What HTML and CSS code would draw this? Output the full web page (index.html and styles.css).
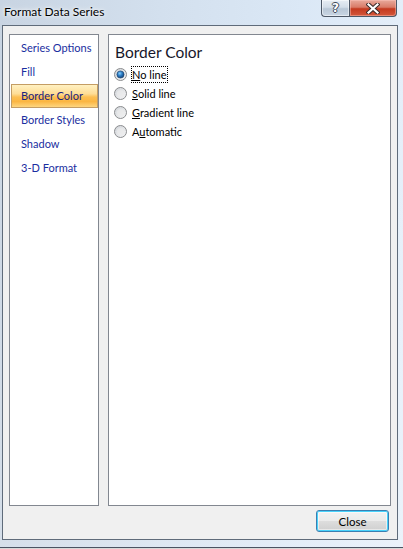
FILE: index.html
```html
<!DOCTYPE html>
<html>
<head>
<meta charset="utf-8">
<link rel="stylesheet" href="styles.css">
</head>
<body>
<div class="window">
  <div class="titlebar">
    <span class="title">Format Data Series</span>
    <div class="caption-btns">
      <div class="cap-btn help"><span class="help-glyph">?</span></div>
      <div class="cap-btn close">
        <svg width="14" height="11" viewBox="0 0 14 11">
          <path d="M2.5 1.5 L11.5 9.5 M11.5 1.5 L2.5 9.5" stroke="#3a2a2a" stroke-width="4.2" stroke-linecap="square" fill="none"/>
          <path d="M2.5 1.5 L11.5 9.5 M11.5 1.5 L2.5 9.5" stroke="#ffffff" stroke-width="2.2" stroke-linecap="square" fill="none"/>
        </svg>
      </div>
    </div>
  </div>
  <div class="client">
    <div class="panes">
      <ul class="nav">
        <li class="nav-item">Series Options</li>
        <li class="nav-item">Fill</li>
        <li class="nav-item selected">Border Color</li>
        <li class="nav-item">Border Styles</li>
        <li class="nav-item">Shadow</li>
        <li class="nav-item">3-D Format</li>
      </ul>
      <div class="content">
        <h1 class="heading">Border Color</h1>
        <div class="radio-list">
          <div class="radio">
            <svg class="radio-icon" width="13" height="13" viewBox="0 0 13 13">
              <defs>
                <linearGradient id="face1" x1="0" y1="0" x2="1" y2="1">
                  <stop offset="0" stop-color="#cfd3d8"/>
                  <stop offset="1" stop-color="#f7f7f7"/>
                </linearGradient>
                <radialGradient id="dot1" cx="40%" cy="35%" r="65%">
                  <stop offset="0" stop-color="#8ad0ff"/>
                  <stop offset="0.5" stop-color="#2a7cc4"/>
                  <stop offset="1" stop-color="#15457a"/>
                </radialGradient>
              </defs>
              <circle cx="6.5" cy="6.5" r="6" fill="url(#face1)" stroke="#8a8c8e"/>
              <circle cx="6.5" cy="6.5" r="3.6" fill="url(#dot1)" stroke="#1d3f69" stroke-width="0.6"/>
            </svg>
            <span class="label focus"><u>N</u>o line</span>
          </div>
          <div class="radio">
            <svg class="radio-icon" width="13" height="13" viewBox="0 0 13 13">
              <defs>
                <linearGradient id="face2" x1="0" y1="0" x2="1" y2="1">
                  <stop offset="0" stop-color="#cfd3d8"/>
                  <stop offset="1" stop-color="#f7f7f7"/>
                </linearGradient>
              </defs>
              <circle cx="6.5" cy="6.5" r="6" fill="url(#face2)" stroke="#8a8c8e"/>
              <circle cx="6.5" cy="6.5" r="3.6" fill="#ececec" opacity="0.6"/>
            </svg>
            <span class="label"><u>S</u>olid line</span>
          </div>
          <div class="radio">
            <svg class="radio-icon" width="13" height="13" viewBox="0 0 13 13">
              <defs>
                <linearGradient id="face3" x1="0" y1="0" x2="1" y2="1">
                  <stop offset="0" stop-color="#cfd3d8"/>
                  <stop offset="1" stop-color="#f7f7f7"/>
                </linearGradient>
              </defs>
              <circle cx="6.5" cy="6.5" r="6" fill="url(#face3)" stroke="#8a8c8e"/>
              <circle cx="6.5" cy="6.5" r="3.6" fill="#ececec" opacity="0.6"/>
            </svg>
            <span class="label"><u>G</u>radient line</span>
          </div>
          <div class="radio">
            <svg class="radio-icon" width="13" height="13" viewBox="0 0 13 13">
              <defs>
                <linearGradient id="face4" x1="0" y1="0" x2="1" y2="1">
                  <stop offset="0" stop-color="#cfd3d8"/>
                  <stop offset="1" stop-color="#f7f7f7"/>
                </linearGradient>
              </defs>
              <circle cx="6.5" cy="6.5" r="6" fill="url(#face4)" stroke="#8a8c8e"/>
              <circle cx="6.5" cy="6.5" r="3.6" fill="#ececec" opacity="0.6"/>
            </svg>
            <span class="label">A<u>u</u>tomatic</span>
          </div>
        </div>
      </div>
    </div>
    <div class="footer">
      <button class="btn">Close</button>
    </div>
  </div>
</div>
</body>
</html>
```
FILE: styles.css
```css
html, body {
  margin: 0;
  padding: 0;
}
body {
  width: 403px;
  height: 549px;
  background: #d8d8d8;
  font-family: Lato, "Noto Sans", sans-serif;
  font-size: 11px;
  color: #000;
  overflow: hidden;
}
.window {
  box-sizing: border-box;
  width: 403px;
  height: 548px;
  display: flex;
  flex-direction: column;
  background:
    linear-gradient(180deg, rgba(255,255,255,0.0) 0%, rgba(255,255,255,0.25) 100%),
    linear-gradient(90deg, #c8d4e2 0%, #d3e0ee 40%, #dbe8f6 75%, #e4eef9 100%);
  border-bottom: 1px solid #4a5362;
}
.titlebar {
  height: 25px;
  display: flex;
  align-items: flex-start;
  padding: 0 6px 0 4px;
  flex-shrink: 0;
}
.title {
  margin-top: 4px;
  line-height: 16px;
  font-size: 12px;
  color: #000;
  text-shadow: 0 0 6px rgba(255,255,255,0.9), 0 0 3px rgba(255,255,255,0.9);
}
.caption-btns {
  margin-left: auto;
  display: flex;
}
.cap-btn {
  box-sizing: border-box;
  height: 17px;
  border: 1px solid #4d5867;
  border-top: none;
  display: flex;
  align-items: center;
  justify-content: center;
}
.help {
  width: 28px;
  border-right: none;
  border-bottom-left-radius: 4px;
  background: linear-gradient(180deg, #e7edf4 0%, #d3dde8 45%, #b9c7d6 55%, #c9d6e4 100%);
  box-shadow: inset 0 0 0 1px rgba(255,255,255,0.5);
}
.help-glyph {
  font-family: "DejaVu Sans", sans-serif;
  font-weight: bold;
  font-size: 12px;
  line-height: 12px;
  color: #fff;
  text-shadow: 1px 0 0 #3c4a5a, -1px 0 0 #3c4a5a, 0 1px 0 #3c4a5a, 0 -1px 0 #3c4a5a;
}
.close {
  width: 48px;
  border-bottom-right-radius: 4px;
  background: linear-gradient(180deg, #e8aa9c 0%, #d97b68 45%, #c4391f 55%, #d3583c 100%);
  box-shadow: inset 0 0 0 1px rgba(255,200,190,0.45);
}
.close svg {
  display: block;
}
.client {
  flex: 1;
  margin: 0 5px 7px 2px;
  border: 1px solid #5f6b7a;
  background: #f0f0f0;
  padding: 8px 6px 7px 6px;
  display: flex;
  flex-direction: column;
}
.panes {
  height: 472px;
  display: flex;
  gap: 9px;
}
.nav {
  box-sizing: border-box;
  list-style: none;
  margin: 0;
  padding: 1px 0 0 1px;
  width: 90px;
  height: 472px;
  border: 1px solid #828790;
  background: #fff;
}
.nav-item {
  box-sizing: border-box;
  height: 24px;
  line-height: 21px;
  padding-left: 9px;
  border: 1px solid transparent;
  color: #1a2ea0;
  white-space: nowrap;
}
.nav-item.selected {
  border-color: #c49d64;
  background: linear-gradient(180deg, #fff1c2 0%, #fedd96 40%, #fcbf52 55%, #fbb643 75%, #fed680 100%);
  color: #1a2380;
}
.content {
  box-sizing: border-box;
  width: 283px;
  height: 472px;
  border: 1px solid #828790;
  background: #fff;
  padding: 6px 6px 0 6px;
}
.heading {
  margin: 0;
  font-weight: normal;
  font-size: 15.5px;
  line-height: 22px;
  color: #16162a;
}
.radio-list {
  margin-top: 2px;
  display: flex;
  flex-direction: column;
}
.radio {
  height: 19px;
  display: flex;
  align-items: center;
}
.radio-icon {
  display: block;
  flex-shrink: 0;
  margin-right: 4px;
  margin-left: -1px;
}
.label {
  line-height: 15px;
  padding: 0 1px 0 0;
  border: 1px dotted transparent;
}
.label.focus {
  border-color: #000;
}
.footer {
  margin-top: 4px;
  display: flex;
  justify-content: flex-end;
  padding-right: 2px;
}
.btn {
  box-sizing: border-box;
  width: 73px;
  height: 22px;
  margin: 0;
  padding: 0;
  border: 1px solid #3c7fb1;
  border-radius: 3px;
  font-family: Lato, "Noto Sans", sans-serif;
  font-size: 11.5px;
  color: #000;
  background: linear-gradient(180deg, #f2f2f2 0%, #ebebeb 48%, #dddddd 52%, #cfcfcf 100%);
  box-shadow: inset 0 0 0 1px #48d2fb, inset 0 0 0 2px rgba(255,255,255,0.5);
}
```
